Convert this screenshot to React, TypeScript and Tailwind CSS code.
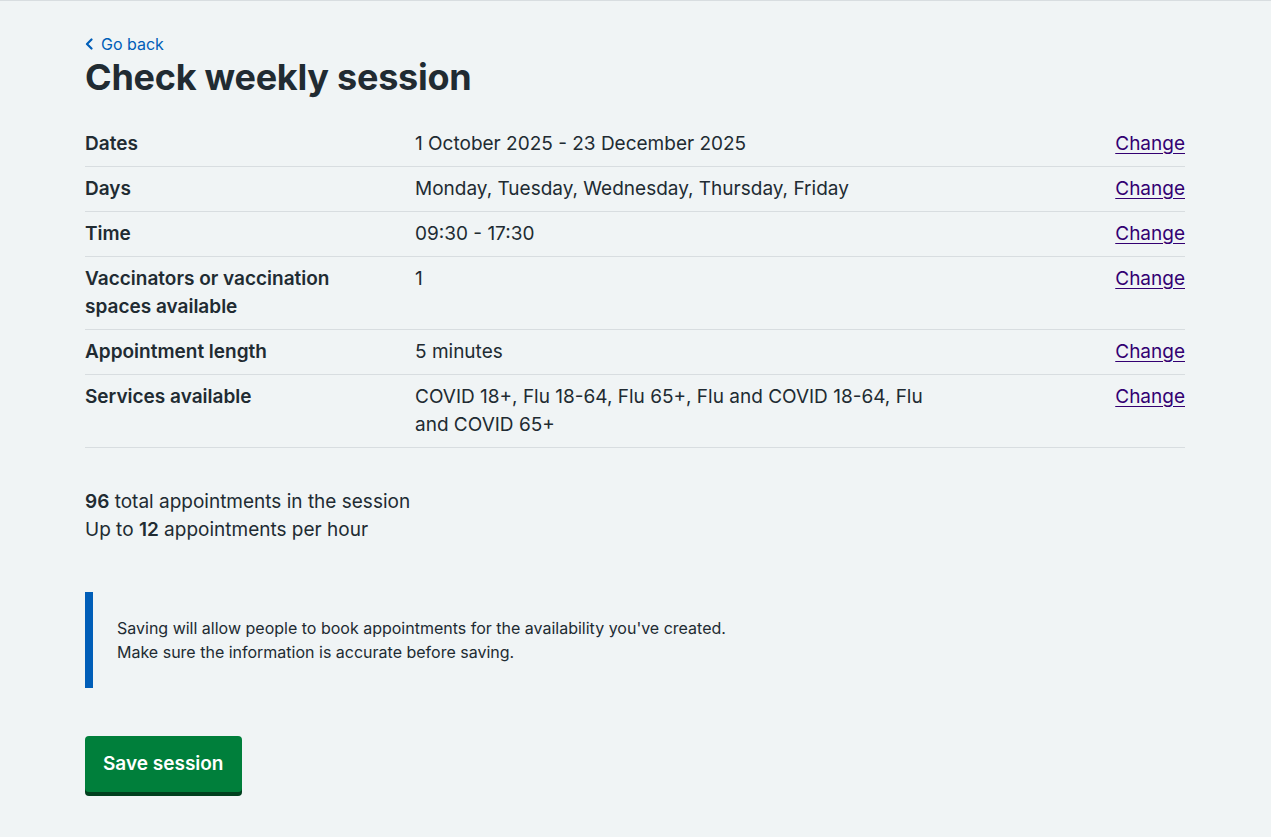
import React from "react";

const rows: { label: string; value: string }[] = [
  { label: "Dates", value: "1 October 2025 - 23 December 2025" },
  { label: "Days", value: "Monday, Tuesday, Wednesday, Thursday, Friday" },
  { label: "Time", value: "09:30 - 17:30" },
  { label: "Vaccinators or vaccination spaces available", value: "1" },
  { label: "Appointment length", value: "5 minutes" },
  {
    label: "Services available",
    value: "COVID 18+, Flu 18-64, Flu 65+, Flu and COVID 18-64, Flu and COVID 65+",
  },
];

const App = () => {
  return (
    <section className="min-h-[837px] w-full bg-[#f0f4f5] border-t border-t-[#d8dde0] font-['Inter',sans-serif] text-[#212b32]">
      <div className="w-[1100px] ml-[85px] pt-[31px] pb-[40px]">
        <a href="#" className="flex items-center gap-[7px] text-[#005eb8] text-[16px] leading-[24px]">
          <svg width="9" height="12" viewBox="0 0 9 12" fill="none">
            <path d="M6.5 1.5 L2 6 L6.5 10.5" stroke="#005eb8" strokeWidth="2.2" strokeLinecap="round" strokeLinejoin="round" />
          </svg>
          Go back
        </a>
        <h1 className="text-[36px] leading-[40px] font-bold mt-[1px] tracking-[-0.25px]">
          Check weekly session
        </h1>

        <dl className="mt-[25px] text-[19px] leading-[28px]">
          {rows.map((row) => (
            <div key={row.label} className="flex border-b border-b-[#d8dde0]">
              <dt className="w-[30%] pr-[24px] py-[8px] font-semibold">{row.label}</dt>
              <dd className="w-[50%] pr-[24px] py-[8px]">{row.value}</dd>
              <dd className="w-[20%] py-[8px] text-right">
                <a href="#" className="text-[#330072] underline underline-offset-[3px]">
                  Change
                </a>
              </dd>
            </div>
          ))}
        </dl>

        <div className="mt-[40px] text-[19px] leading-[28px]">
          <p>
            <span className="font-semibold">96</span> total appointments in the session
          </p>
          <p>
            Up to <span className="font-semibold">12</span> appointments per hour
          </p>
        </div>

        <div className="mt-[48px] border-l-[8px] border-l-[#005eb8] pl-[24px] py-[24px] text-[16px] leading-[24px]">
          <p>Saving will allow people to book appointments for the availability you've created.</p>
          <p>Make sure the information is accurate before saving.</p>
        </div>

        <button className="mt-[48px] bg-[#007f3b] text-white font-semibold text-[19px] leading-[28px] px-[18px] py-[14px] rounded-[4px] shadow-[0_4px_0_#00401e]">
          Save session
        </button>
      </div>
    </section>
  );
};

export default App;
